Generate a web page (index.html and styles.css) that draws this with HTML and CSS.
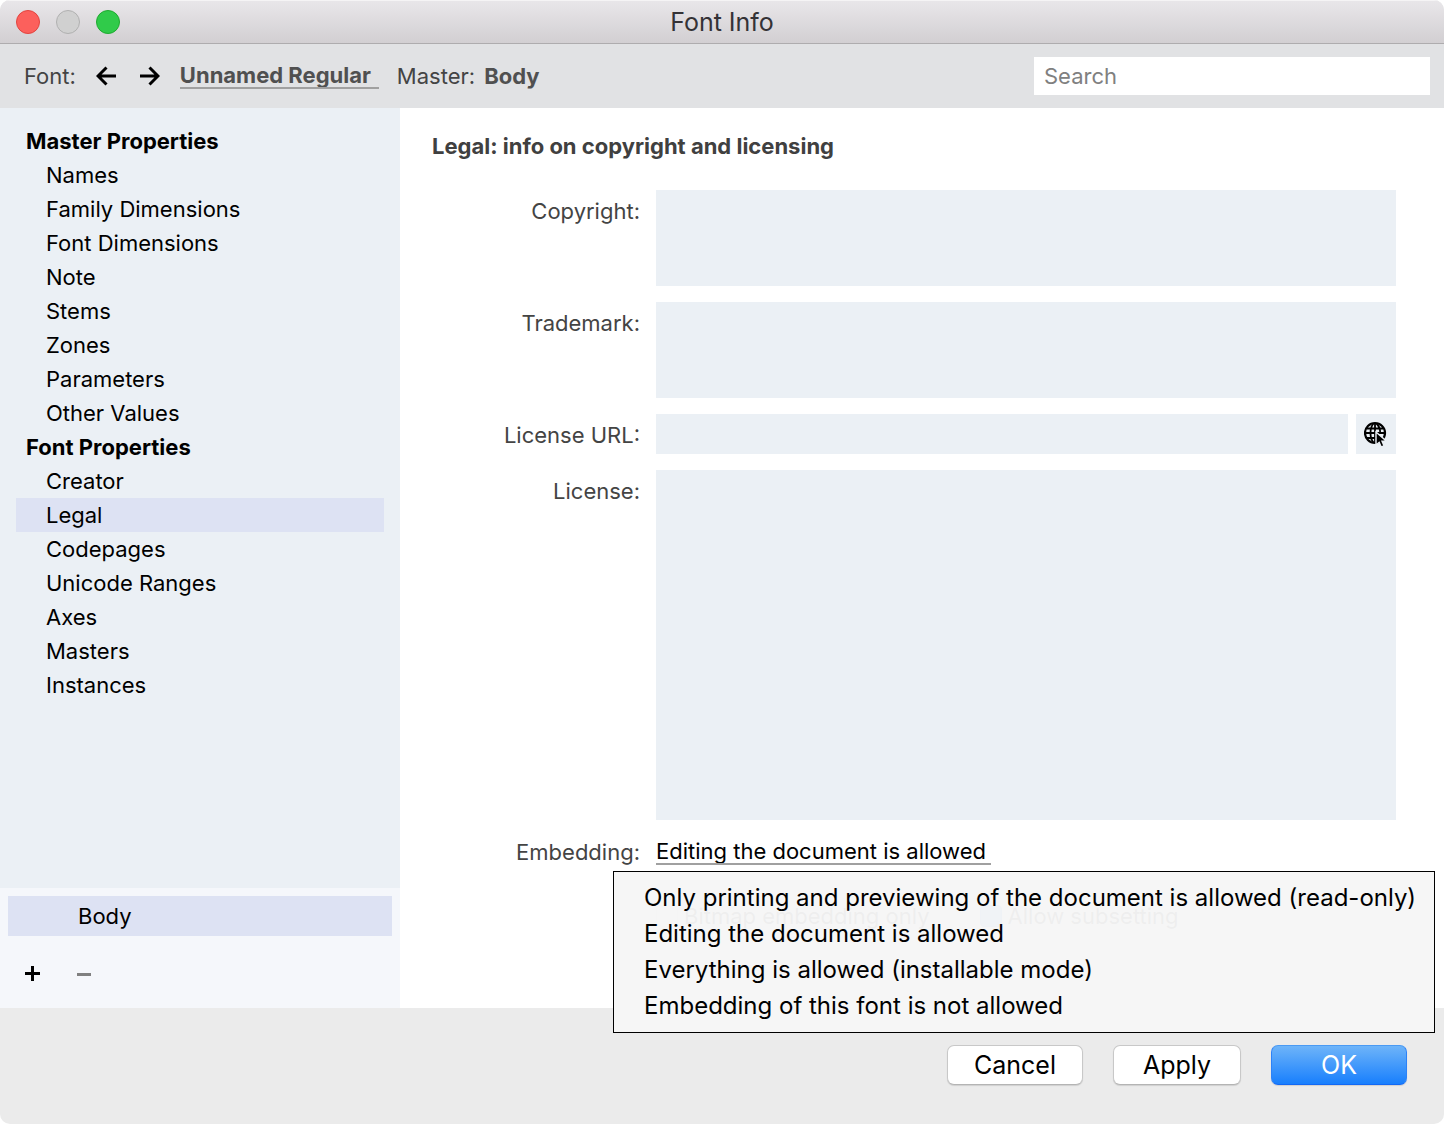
FILE: index.html
```html
<!DOCTYPE html>
<html lang="en">
<head>
<meta charset="utf-8">
<title>Font Info</title>
<link rel="stylesheet" href="styles.css">
</head>
<body>
<div class="window">
  <header class="titlebar">
    <div class="lights">
      <button class="light light-close" type="button" aria-label="Close"></button>
      <button class="light light-minimize" type="button" aria-label="Minimize" disabled></button>
      <button class="light light-zoom" type="button" aria-label="Zoom"></button>
    </div>
    <h1 class="title">Font Info</h1>
  </header>

  <div class="toolbar">
    <label class="toolbar-label" for="font">Font:</label>
    <div class="arrows">
      <button class="icon-button" type="button" aria-label="Previous font">
        <svg width="20" height="20" viewBox="0 0 20 20" fill="none" stroke="#000" stroke-width="3"><path d="M20 10H2.500M10.500 1.500L2 10l8.500 8.500"/></svg>
      </button>
      <button class="icon-button" type="button" aria-label="Next font">
        <svg width="20" height="20" viewBox="0 0 20 20" fill="none" stroke="#000" stroke-width="3"><path d="M0 10h17.500M9.500 1.500L18 10l-8.500 8.500"/></svg>
      </button>
    </div>
    <select class="picker picker-font" id="font"><option>Unnamed Regular</option></select>
    <span class="toolbar-label">Master:</span>
    <strong class="master">Body</strong>
    <input class="search" type="search" placeholder="Search" aria-label="Search">
  </div>

  <main class="main">
    <aside class="sidebar">
      <nav class="nav">
        <h2 class="nav-heading">Master Properties</h2>
        <a class="nav-item" href="#names">Names</a>
        <a class="nav-item" href="#family-dimensions">Family Dimensions</a>
        <a class="nav-item" href="#font-dimensions">Font Dimensions</a>
        <a class="nav-item" href="#note">Note</a>
        <a class="nav-item" href="#stems">Stems</a>
        <a class="nav-item" href="#zones">Zones</a>
        <a class="nav-item" href="#parameters">Parameters</a>
        <a class="nav-item" href="#other-values">Other Values</a>
        <h2 class="nav-heading">Font Properties</h2>
        <a class="nav-item" href="#creator">Creator</a>
        <a class="nav-item nav-item-current" href="#legal" aria-current="page">Legal</a>
        <a class="nav-item" href="#codepages">Codepages</a>
        <a class="nav-item" href="#unicode-ranges">Unicode Ranges</a>
        <a class="nav-item" href="#axes">Axes</a>
        <a class="nav-item" href="#masters">Masters</a>
        <a class="nav-item" href="#instances">Instances</a>
      </nav>
      <div class="masters">
        <button class="master-row" type="button">Body</button>
        <div class="master-actions">
          <button class="icon-button" type="button" aria-label="Add master">
            <svg width="20" height="20" viewBox="0 0 20 20"><path d="M2 8h6V2h3v6h6v3h-6v6H8v-6H2z"/></svg>
          </button>
          <button class="icon-button" type="button" aria-label="Remove master" disabled>
            <svg width="20" height="20" viewBox="0 0 20 20"><path fill="#808080" d="M2 9h14v3H2z"/></svg>
          </button>
        </div>
      </div>
    </aside>

    <section class="content" id="legal">
      <h2 class="content-title">Legal: info on copyright and licensing</h2>
      <form class="form">
        <label class="label" for="copyright">Copyright:</label>
        <textarea class="field" id="copyright"></textarea>

        <label class="label" for="trademark">Trademark:</label>
        <textarea class="field" id="trademark"></textarea>

        <label class="label" for="license-url">License URL:</label>
        <div class="url-row">
          <input class="field url" id="license-url" type="text">
          <button class="open-url" type="button" aria-label="Open in browser">
            <svg width="24" height="26" viewBox="0 0 24 26" fill="none" stroke="#000">
              <circle cx="11" cy="12" r="10" stroke-width="2.200"/>
              <path stroke-width="1.800" d="M11 2v20M1 12h20M3 7.500h16M3 17h10M9.500 2.500C5.500 7 5.500 17 9.500 21.500M12.500 2.500c3 3 3.800 6.500 3.600 9.500"/>
              <path fill="#000" stroke="#ebf0f5" stroke-width="1.400" d="M12 11v13l3.200-2.600 2 4.600 2.800-1.200-2-4.600h4.500z"/>
            </svg>
          </button>
        </div>

        <label class="label" for="license">License:</label>
        <textarea class="field" id="license"></textarea>

        <label class="label label-inline" for="embedding">Embedding:</label>
        <div class="embedding">
          <select class="picker picker-embedding" id="embedding"><option>Editing the document is allowed</option></select>
          <ul class="menu" role="listbox" aria-label="Embedding">
            <li class="menu-item" role="option" aria-selected="false">Only printing and previewing of the document is allowed (read-only)</li>
            <li class="menu-item" role="option" aria-selected="true">Editing the document is allowed</li>
            <li class="menu-item" role="option" aria-selected="false">Everything is allowed (installable mode)</li>
            <li class="menu-item" role="option" aria-selected="false">Embedding of this font is not allowed</li>
          </ul>
        </div>

        <div class="checks">
          <label class="check"><input class="box" type="checkbox">Bitmap embedding only</label>
          <label class="check"><input class="box" type="checkbox" checked>Allow subsetting</label>
        </div>
      </form>
    </section>
  </main>

  <footer class="footer">
    <button class="button button-wide" type="button">Cancel</button>
    <button class="button" type="button">Apply</button>
    <button class="button button-wide button-primary" type="button">OK</button>
  </footer>
</div>
</body>
</html>
```
FILE: styles.css
```css
* {
  box-sizing: border-box;
}

body {
  margin: 0;
  background: #fff;
  color: #000;
  font: 22px/28px Inter, "Liberation Sans", sans-serif;
}

h1,
h2,
ul {
  margin: 0;
  padding: 0;
}

button,
input,
select,
textarea {
  margin: 0;
  padding: 0;
  border: 0;
  border-radius: 0;
  background: none;
  color: inherit;
  font: inherit;
  appearance: none;
}

svg {
  display: block;
}

.window {
  display: flex;
  flex-direction: column;
  min-height: 100vh;
  border-radius: 10px;
  background: #ebebeb;
  overflow: hidden;
}

/* Title bar */
.titlebar {
  display: grid;
  grid-template-columns: 1fr auto 1fr;
  align-items: center;
  height: 44px;
  padding: 0 16px;
  border-bottom: 1px solid #aeacae;
  background: linear-gradient(#e9e7ea, #d2cfd2);
  box-shadow: inset 0 1px #f5f4f5;
}

.lights {
  display: flex;
  gap: 16px;
}

.light {
  width: 24px;
  height: 24px;
  border: 1px solid;
  border-radius: 50%;
}

.light-close {
  border-color: #e2443f;
  background: #fc605c;
}

.light-minimize {
  border-color: #b0b0b0;
  background: #d0d0d0;
}

.light-zoom {
  border-color: #1faa30;
  background: #30cb4a;
}

.title {
  color: #343236;
  font-size: 25px;
  font-weight: 400;
}

/* Toolbar */
.toolbar {
  display: flex;
  align-items: center;
  height: 64px;
  padding: 0 14px 0 24px;
  background: #e1e2e4;
}

.toolbar-label {
  color: #444;
}

.arrows {
  display: flex;
  gap: 24px;
  margin: 0 20px;
}

.picker {
  height: 26px;
  border-bottom: 2px solid #a0a0a0;
  line-height: 24px;
}

.picker-font {
  width: 199px;
  margin-right: 18px;
  color: #505050;
  font-weight: 700;
}

.master {
  margin-left: 9px;
  color: #505050;
}

.search {
  width: 396px;
  height: 38px;
  margin-left: auto;
  padding: 0 10px;
  background: #fff;
}

.search::placeholder {
  color: #808080;
}

/* Sidebar */
.main {
  display: grid;
  grid-template-columns: 400px 1fr;
  flex: 1;
}

.sidebar {
  display: flex;
  flex-direction: column;
  background: #ebf0f5;
}

.nav {
  flex: 1;
  padding: 16px;
}

.nav-heading {
  padding-left: 10px;
  font-size: 22px;
  font-weight: 700;
  line-height: 34px;
}

.nav-item {
  display: block;
  padding-left: 30px;
  color: #000;
  line-height: 34px;
  text-decoration: none;
}

.nav-item-current {
  background: #dde2f3;
}

.masters {
  height: 120px;
  padding: 8px;
  background: #f5f7fb;
}

.master-row {
  display: block;
  width: 100%;
  height: 40px;
  padding-left: 70px;
  background: #dde2f3;
  text-align: left;
}

.master-actions {
  display: flex;
  gap: 32px;
  padding: 28px 15px;
}

/* Legal form */
.content {
  display: flex;
  flex-direction: column;
  padding: 24px 48px 76px 32px;
  background: #fff;
}

.content-title {
  margin-bottom: 30px;
  color: #404040;
  font-size: 22px;
  font-weight: 700;
}

.form {
  display: grid;
  grid-template-columns: 208px 1fr;
  grid-template-rows: 96px 96px 40px 1fr 32px 48px;
  gap: 16px;
  flex: 1;
}

.label {
  padding-top: 7px;
  color: #444;
  text-align: right;
}

.label-inline {
  padding-top: 2px;
}

.field {
  display: block;
  width: 100%;
  padding: 6px 8px;
  background: #ebf0f5;
  resize: none;
}

.url-row {
  display: flex;
  gap: 8px;
}

.url {
  flex: 1;
}

.open-url {
  display: flex;
  justify-content: center;
  align-items: center;
  width: 40px;
  background: #ebf0f5;
}

.embedding {
  position: relative;
  display: flex;
  align-items: center;
}

.picker-embedding {
  width: 335px;
}

.checks {
  display: flex;
  align-items: end;
  gap: 50px;
  grid-column: 2;
}

.check {
  display: flex;
  align-items: center;
  gap: 6px;
  height: 32px;
}

.box {
  width: 22px;
  height: 22px;
  border: 1px solid #ccc;
  border-radius: 4px;
}

.box:checked {
  border-color: #2a80ff;
  background: #3b93fb;
}

/* Open drop-down list, see-through enough to hint at the row below */
.menu {
  position: absolute;
  top: 35px;
  left: -43px;
  padding: 8px 18px 8px 30px;
  border: 1px solid #000;
  background: rgba(246, 246, 246, 0.97);
  font-size: 24px;
  list-style: none;
  white-space: nowrap;
}

.menu-item {
  line-height: 36px;
}

/* Footer */
.footer {
  display: flex;
  justify-content: flex-end;
  gap: 30px;
  height: 116px;
  padding: 37px 37px 0;
}

.button {
  width: 128px;
  height: 40px;
  border: 1px solid #c8c8c8;
  border-bottom-color: #b4b4b4;
  border-radius: 7px;
  background: #fff;
  box-shadow: 0 1px 1px rgba(0, 0, 0, 0.12);
  font-size: 25px;
}

.button-wide {
  width: 136px;
}

.button-primary {
  border-color: #4a9af3 #2c82f8 #1268f5;
  background: linear-gradient(#6eb4f9, #187ffd);
  color: #fff;
}
```
